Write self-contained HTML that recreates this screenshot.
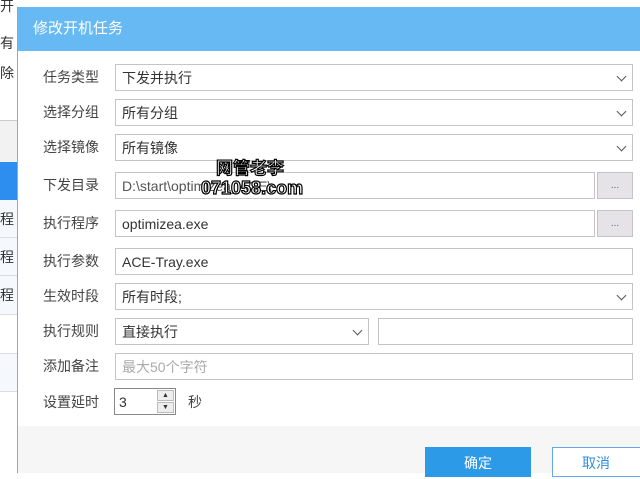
<!DOCTYPE html>
<html><head><meta charset="utf-8"><style>
*{box-sizing:border-box;margin:0;padding:0}
body{width:640px;height:473px;overflow:hidden;position:relative;background:#fff;font-family:"Liberation Sans","Noto Sans CJK SC",sans-serif;font-size:14px;color:#333}
.a{position:absolute}
.lbl{position:absolute;left:43px;font-size:14px;color:#444;line-height:26px}
.in{position:absolute;border:1px solid #c4c4c4;background:#fff;height:27px;line-height:26px;padding-left:6px;font-size:14px;color:#333}
.chev{position:absolute;right:7px;top:8px;width:7px;height:7px;border-right:1.5px solid #555;border-bottom:1.5px solid #555;transform:rotate(45deg)}
.btn{position:absolute;width:36px;height:27px;background:#e6e3e8;border:1px solid #c4c4c4;font-size:10px;text-align:center;line-height:26px;color:#666}
</style></head><body>
<div class="a" style="left:0;top:0;width:18px;height:473px;background:#fff;font-size:14px;color:#333">
<div class="a" style="top:-4px;left:0">开</div>
<div class="a" style="top:33px;left:0">有</div>
<div class="a" style="top:63px;left:0">除</div>
<div class="a" style="top:120px;left:0;width:18px;height:42px;background:#f2f2f2;border-top:1px solid #ccc"></div>
<div class="a" style="top:162px;left:0;width:18px;height:38px;background:#2e8ef0"></div>
<div class="a" style="top:200px;left:0;width:18px;height:38px;background:#f5f8fc;border-bottom:1px solid #ddd;line-height:38px">程</div>
<div class="a" style="top:238px;left:0;width:18px;height:38px;background:#f5f8fc;border-bottom:1px solid #ddd;line-height:38px">程</div>
<div class="a" style="top:276px;left:0;width:18px;height:39px;background:#f5f8fc;border-bottom:1px solid #ddd;line-height:38px">程</div>
<div class="a" style="top:353px;left:0;width:18px;height:39px;background:#f5f8fc;border-top:1px solid #ddd;border-bottom:1px solid #ddd"></div>
</div>
<div class="a" style="left:17px;top:7px;width:623px;height:466px;background:#fff;border-left:1px solid #7ab0dc">
<div class="a" style="left:0;top:0;width:623px;height:44px;background:#66b9f2;color:#fff;font-size:15px;line-height:44px;padding-left:15px">修改开机任务</div>
<div class="a" style="left:0;top:419px;width:623px;height:47px;background:#f6f6f6"></div>
</div>
<div class="lbl" style="top:64px">任务类型</div><div class="in" style="left:115px;top:64px;width:518px">下发并执行<i class="chev"></i></div>
<div class="lbl" style="top:99px">选择分组</div><div class="in" style="left:115px;top:99px;width:518px">所有分组<i class="chev"></i></div>
<div class="lbl" style="top:134px">选择镜像</div><div class="in" style="left:115px;top:134px;width:518px">所有镜像<i class="chev"></i></div>
<div class="lbl" style="top:172px">下发目录</div><div class="in" style="left:115px;top:172px;width:480px;color:#555">D:\start\optimizea_ACE\</div><div class="btn" style="left:597px;top:172px">...</div>
<div class="lbl" style="top:210px">执行程序</div><div class="in" style="left:115px;top:210px;width:480px">optimizea.exe</div><div class="btn" style="left:597px;top:210px">...</div>
<div class="lbl" style="top:248px">执行参数</div><div class="in" style="left:115px;top:248px;width:518px">ACE-Tray.exe</div>
<div class="lbl" style="top:283px">生效时段</div><div class="in" style="left:115px;top:283px;width:518px">所有时段;<i class="chev"></i></div>
<div class="lbl" style="top:318px">执行规则</div><div class="in" style="left:115px;top:318px;width:254px">直接执行<i class="chev"></i></div><div class="in" style="left:378px;top:318px;width:255px"></div>
<div class="lbl" style="top:353px">添加备注</div><div class="in" style="left:115px;top:353px;width:518px;color:#aaa">最大50个字符</div>
<div class="lbl" style="top:389px">设置延时</div>
<div class="in" style="left:114px;top:388px;width:62px;border-color:#888;padding-left:4px">3
<div class="a" style="left:42px;top:1px;width:17px;height:11px;background:#eee;border:1px solid #bbb;font-size:7px;line-height:9px;text-align:center">▲</div>
<div class="a" style="left:42px;top:13px;width:17px;height:11px;background:#eee;border:1px solid #bbb;font-size:7px;line-height:9px;text-align:center">▼</div></div>
<div class="a" style="left:188px;top:389px;line-height:26px;color:#444">秒</div>
<div class="a" style="left:425px;top:447px;width:106px;height:30px;background:#2d9ae8;color:#fff;text-align:center;line-height:32px">确定</div>
<div class="a" style="left:552px;top:447px;width:100px;height:30px;border:1px solid #66a9e8;color:#2d8fe0;text-align:center;line-height:30px;padding-right:12px;background:#fff">取消</div>
<div class="a" style="left:216px;top:154px;font-size:17px;font-weight:bold;color:#fff;-webkit-text-stroke:1.2px #000">网管老李</div>
<div class="a" style="left:201px;top:178px;font-size:18px;font-weight:bold;color:#fff;-webkit-text-stroke:1.2px #000">071058.com</div>
</body></html>
